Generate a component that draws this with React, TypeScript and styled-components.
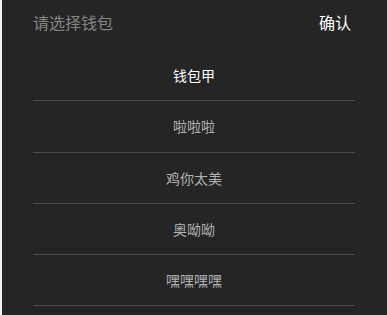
import React from 'react';
import styled, {createGlobalStyle} from 'styled-components';

const GlobalStyle = createGlobalStyle`
  html, body {
    margin: 0;
    padding: 0;
    background: #eef1f6;
  }
  body {
    font-family: "Noto Sans CJK SC", "Noto Sans", sans-serif;
  }
`

const Page = styled.div`
  display: flex;
  padding-left: 2px;
  height: 315px;
`

const Sheet = styled.div`
  flex: 1;
  background: #252525;
  display: flex;
  flex-direction: column;
`

const Header = styled.div`
  display: flex;
  align-items: center;
  justify-content: space-between;
  height: 44px;
  padding: 0 36px 0 31px;
  margin-bottom: 6px;
`

const Hint = styled.span`
  color: #858585;
  font-size: 16px;
`

const Confirm = styled.span`
  color: #ffffff;
  font-size: 16px;
  font-weight: 400;
`

const List = styled.div`
  display: flex;
  flex-direction: column;
  padding: 0 32px 0 31px;
`

const Row = styled.div<{ $active?: boolean }>`
  height: 50.25px;
  display: flex;
  align-items: center;
  justify-content: center;
  border-bottom: 1px solid #4c4c4c;
  font-size: 14px;
  color: ${p => (p.$active ? '#ffffff' : '#b2b2b2')};
`

const wallets = ['钱包甲', '啦啦啦', '鸡你太美', '奥呦呦', '嘿嘿嘿嘿'];

export default function App() {
    return (
        <Page>
            <GlobalStyle />
            <Sheet>
                <Header>
                    <Hint>请选择钱包</Hint>
                    <Confirm>确认</Confirm>
                </Header>
                <List>
                    {wallets.map((name, i) => (
                        <Row key={name} $active={i === 0}>{name}</Row>
                    ))}
                </List>
            </Sheet>
        </Page>
    );
}
